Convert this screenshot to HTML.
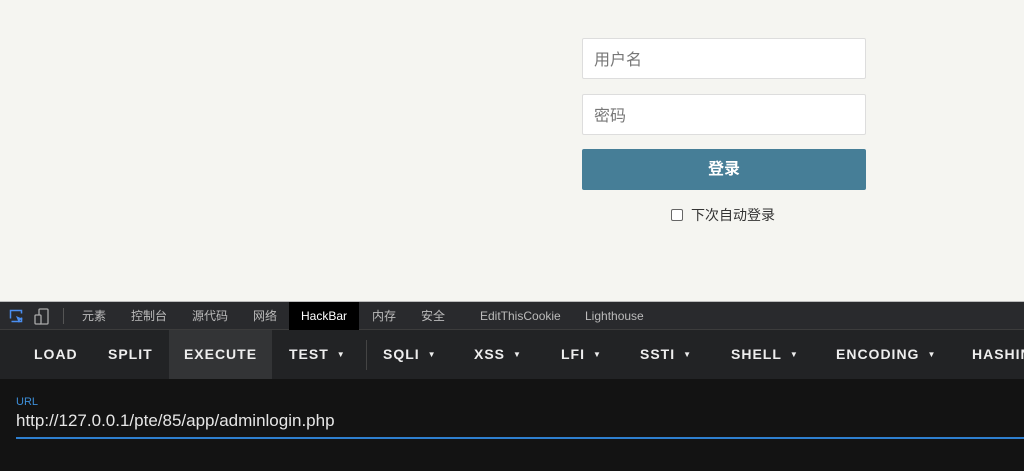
<!DOCTYPE html>
<html><head><meta charset="utf-8"><style>
*{margin:0;padding:0;box-sizing:border-box}
body{width:1024px;height:471px;overflow:hidden;background:#f5f5f1;font-family:"Liberation Sans","Noto Sans CJK SC",sans-serif;position:relative}
.in{position:absolute;left:582px;width:284px;height:41px;background:#fff;border:1px solid #ddd;border-radius:2px;font-size:16px;color:#777;padding:7px 11px}
.btn{position:absolute;left:582px;top:149px;width:284px;height:41px;background:#467e97;border-radius:2px;color:#fff;font-weight:bold;font-size:16px;text-align:center;line-height:41px}
.chk{position:absolute;left:671px;top:205px;font-size:14px;color:#333}
.chk span{display:inline-block;width:12px;height:12px;border:1px solid #666;border-radius:2px;vertical-align:-1px;margin-right:8px;background:#fff}
.tabs{position:absolute;top:301px;left:0;width:1024px;height:29px;background:#292a2d;border-top:1px solid #bbb;border-bottom:1px solid #3c3c3c;font-size:12px;color:#bbb}
.tabs div{position:absolute;top:0;line-height:28px}
.bar{position:absolute;top:330px;left:0;width:1024px;height:49px;background:#222325;color:#eee;font-size:14px;font-weight:bold;letter-spacing:1px}
.bar div{position:absolute;top:0;line-height:48px;white-space:nowrap}
.ar{font-size:8px;margin-left:8px;vertical-align:2px}
.bot{position:absolute;top:379px;left:0;width:1024px;height:92px;background:#131313}
</style></head><body>
<div class="in" style="top:38px">用户名</div>
<div class="in" style="top:94px">密码</div>
<div class="btn">登录</div>
<div class="chk"><span></span>下次自动登录</div>
<div class="tabs">
<svg style="position:absolute;left:9px;top:7px" width="16" height="16"><rect x="1.5" y="1.5" width="11" height="11" fill="none" stroke="#4a8ef0" stroke-width="1.5" stroke-dasharray="14 4"/><path d="M7 7l7 3-3 1-1 3z" fill="#4a8ef0"/></svg>
<svg style="position:absolute;left:34px;top:6px" width="16" height="18"><rect x="5" y="1" width="9" height="15" rx="1" fill="none" stroke="#aaa" stroke-width="1.3"/><rect x="1" y="7" width="6" height="9" rx="1" fill="#292a2d" stroke="#aaa" stroke-width="1.3"/></svg>
<div style="left:63px;top:6px;width:1px;height:16px;background:#555"></div>
<div style="left:82px">元素</div><div style="left:131px">控制台</div><div style="left:192px">源代码</div><div style="left:253px">网络</div>
<div style="left:289px;width:70px;background:#000;color:#fff;text-align:center">HackBar</div>
<div style="left:372px">内存</div><div style="left:421px">安全</div><div style="left:480px">EditThisCookie</div><div style="left:585px">Lighthouse</div>
</div>
<div class="bar">
<div style="left:34px">LOAD</div><div style="left:108px">SPLIT</div>
<div style="left:169px;width:103px;height:49px;background:#333436;text-align:center">EXECUTE</div>
<div style="left:289px">TEST<span class="ar">▼</span></div>
<div style="left:366px;top:10px;width:1px;height:30px;background:#444"></div>
<div style="left:383px">SQLI<span class="ar">▼</span></div><div style="left:474px">XSS<span class="ar">▼</span></div>
<div style="left:561px">LFI<span class="ar">▼</span></div><div style="left:640px">SSTI<span class="ar">▼</span></div>
<div style="left:731px">SHELL<span class="ar">▼</span></div><div style="left:836px">ENCODING<span class="ar">▼</span></div>
<div style="left:972px">HASHING</div>
</div>
<div class="bot">
<div style="position:absolute;left:16px;top:17px;font-size:11px;color:#3d8fd9">URL</div>
<div style="position:absolute;left:16px;top:32px;font-size:17px;color:#e6e6e6">http://127.0.0.1/pte/85/app/adminlogin.php</div>
<div style="position:absolute;left:16px;top:58px;width:1008px;height:2px;background:#2e7fcf"></div>
</div>
</body></html>
